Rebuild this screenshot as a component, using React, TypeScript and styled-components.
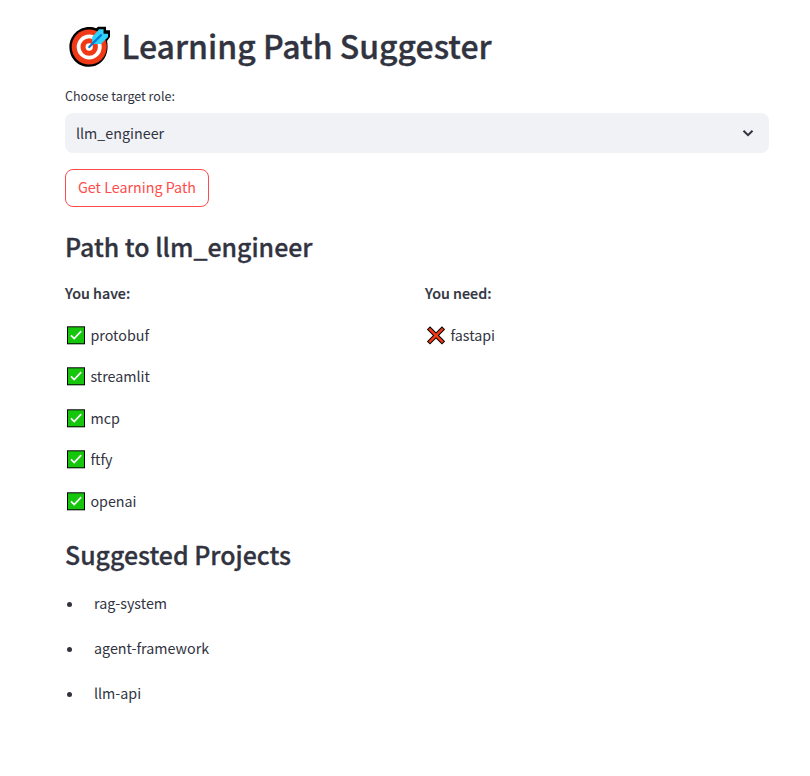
import React from "react";
import styled, { createGlobalStyle } from "styled-components";

const GlobalStyle = createGlobalStyle`
  * { box-sizing: border-box; }
  body {
    margin: 0;
    background: #ffffff;
    color: #31333f;
    font-family: "Noto Sans CJK SC", "Noto Sans", sans-serif;
    font-size: 14.3px;
  }
`;

const Page = styled.main`
  width: 704px;
  margin-left: 65px;
  padding-top: 20px;
`;

const Title = styled.h1`
  display: flex;
  align-items: flex-start;
  gap: 11.5px;
  height: 54px;
  margin: 0 0 13px;
  padding-left: 4px;
  font-size: 32px;
  font-weight: 500;
  line-height: 50px;
  white-space: nowrap;
  -webkit-text-stroke: 0.35px #31333f;

  svg {
    flex: none;
    margin-top: 6px;
  }
`;

const FieldLabel = styled.label`
  display: block;
  height: 18px;
  margin-bottom: 8px;
  font-size: 12.5px;
  line-height: 18px;
`;

const Select = styled.div`
  display: flex;
  align-items: center;
  justify-content: space-between;
  height: 40px;
  padding: 0 14px 0 11px;
  border-radius: 8px;
  background: #f0f2f6;
  line-height: 24px;
`;

const ActionButton = styled.button`
  display: flex;
  align-items: center;
  justify-content: center;
  width: 144px;
  height: 38px;
  margin: 16px 0 0;
  padding: 0 0 2px;
  border: 1px solid #ff4b4b;
  border-radius: 8px;
  background: #ffffff;
  color: #ff4b4b;
  font: inherit;
  line-height: 24px;
`;

const Heading = styled.h2<{ $top: number }>`
  height: 34px;
  margin: ${(p) => p.$top}px 0 0;
  font-size: 24.9px;
  font-weight: 500;
  line-height: 34px;
  -webkit-text-stroke: 0.3px #31333f;
`;

const Columns = styled.div`
  display: grid;
  grid-template-columns: 344px 344px;
  gap: 16px;
  margin-top: 18px;
`;

const ColumnTitle = styled.div`
  height: 24px;
  margin-bottom: 17.5px;
  font-weight: 500;
  line-height: 24px;
  -webkit-text-stroke: 0.2px #31333f;
`;

const Skill = styled.div`
  display: flex;
  align-items: center;
  gap: 3.4px;
  height: 24px;
  margin-bottom: 17.5px;
  line-height: 24px;
`;

const Projects = styled.ul`
  display: flex;
  flex-direction: column;
  gap: 21px;
  margin: 20px 0 0;
  padding: 0;
  list-style: none;
`;

const Project = styled.li`
  display: flex;
  align-items: center;
  gap: 22px;
  height: 24px;
  line-height: 24px;

  &::before {
    content: "";
    width: 5px;
    height: 5px;
    margin: 2px 0 0 2px;
    border-radius: 50%;
    background: #31333f;
  }
`;

const TargetIcon = () => (
  <svg width="41" height="42" viewBox="-0.4 0 41.400 42">
    <path d="M29 .5h8v3.500h4v7l-3 4c3 15-6 26-18 26C8 41 0 32 0 21S9 .8 20 .8c3 0 5 .5 7 1.200z" fill="#000" />
    <circle cx="20" cy="21" r="17.700" fill="#f03a17" />
    <circle cx="20" cy="21" r="10.700" fill="none" stroke="#fff" strokeWidth="3.800" />
    <circle cx="20" cy="21" r="3.700" fill="#fff" />
    <path d="M23 18v-7l7-8h4.500v4.500H39V11l-7 7z" fill="#31d2f7" />
    <path d="M20 21L32 9" stroke="#0078d7" strokeWidth="2.200" strokeLinecap="round" />
  </svg>
);

const CheckIcon = () => (
  <svg width="22" height="20" viewBox="0 0 22 20">
    <rect x="2" y="1.300" width="18" height="18" fill="#000" />
    <rect x="3" y="2.300" width="16" height="16" fill="#16c60c" />
    <path d="M6 10.300l3.200 3.200 7-7.300" fill="none" stroke="#fff" strokeWidth="1.700" />
  </svg>
);

const CrossIcon = () => (
  <svg width="22" height="20" viewBox="0 0 22 20">
    <path d="M5 4.400l12 12M17 4.400L5 16.400" stroke="#000" strokeWidth="4.400" strokeLinecap="square" />
    <path d="M5 4.400l12 12M17 4.400L5 16.400" stroke="#f03a17" strokeWidth="2.500" strokeLinecap="square" />
  </svg>
);

const ChevronIcon = () => (
  <svg width="14" height="14" viewBox="0 0 14 14">
    <path d="M2.500 4.800L7 9.200l4.500-4.400" fill="none" stroke="#31333f" strokeWidth="2" />
  </svg>
);

const owned = ["protobuf", "streamlit", "mcp", "ftfy", "openai"];
const needed = ["fastapi"];
const projects = ["rag-system", "agent-framework", "llm-api"];

export default function App() {
  return (
    <>
      <GlobalStyle />
      <Page>
        <Title>
          <TargetIcon />
          Learning Path Suggester
        </Title>
        <FieldLabel>Choose target role:</FieldLabel>
        <Select>
          llm_engineer
          <ChevronIcon />
        </Select>
        <ActionButton>Get Learning Path</ActionButton>
        <Heading $top={22}>Path to llm_engineer</Heading>
        <Columns>
          <div>
            <ColumnTitle>You have:</ColumnTitle>
            {owned.map((name) => (
              <Skill key={name}>
                <CheckIcon />
                {name}
              </Skill>
            ))}
          </div>
          <div>
            <ColumnTitle>You need:</ColumnTitle>
            {needed.map((name) => (
              <Skill key={name}>
                <CrossIcon />
                {name}
              </Skill>
            ))}
          </div>
        </Columns>
        <Heading $top={7}>Suggested Projects</Heading>
        <Projects>
          {projects.map((name) => (
            <Project key={name}>{name}</Project>
          ))}
        </Projects>
      </Page>
    </>
  );
}
